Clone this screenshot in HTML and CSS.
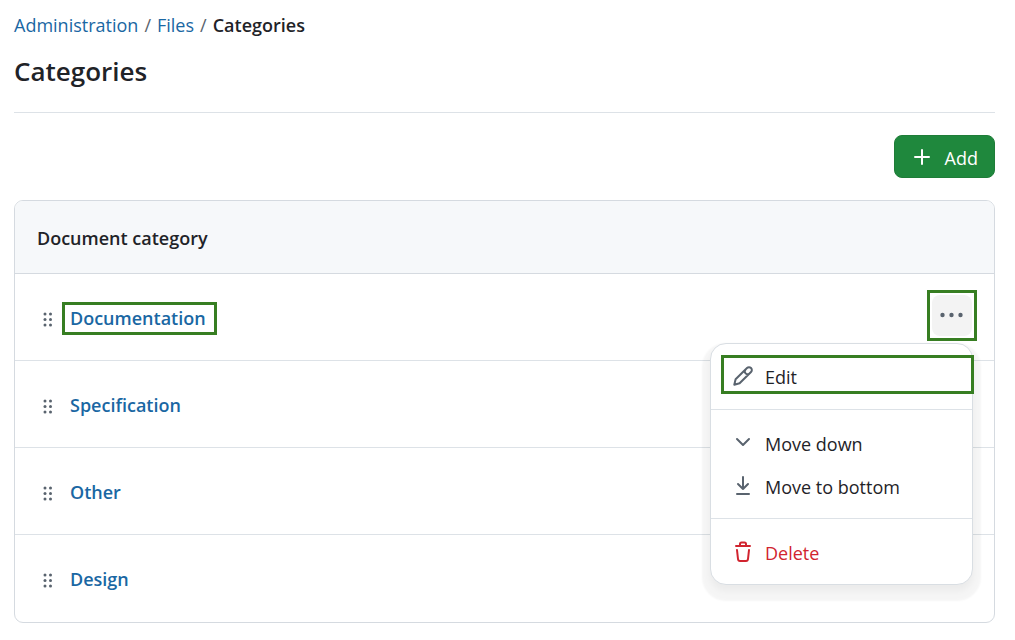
FILE: index.html
```html
<!DOCTYPE html>
<html lang="en">

<head>
    <meta charset="UTF-8">
    <meta name="viewport" content="width=device-width, initial-scale=1.0">
    <title>Categories</title>
    <link rel="stylesheet" href="styles.css">
</head>

<body>
    <nav class="breadcrumb" aria-label="Breadcrumb">
        <a href="#">Administration</a>
        <span class="separator">/</span>
        <a href="#">Files</a>
        <span class="separator">/</span>
        <span class="current">Categories</span>
    </nav>

    <h1>Categories</h1>

    <div class="toolbar">
        <button type="button" class="add-button">
            <svg width="22" height="22" viewBox="0 0 22 22" fill="none" stroke="currentColor" stroke-width="2" stroke-linecap="round"><path d="M11 3v14M4 10h14"/></svg>
            Add
        </button>
    </div>

    <section class="box">
        <h2>Document category</h2>
        <ul class="rows">
            <li>
                <svg class="handle" width="10" height="16" viewBox="0 0 10 16"><circle cx="2" cy="3" r="1.5"/><circle cx="7.5" cy="3" r="1.5"/><circle cx="2" cy="8.5" r="1.5"/><circle cx="7.5" cy="8.5" r="1.5"/><circle cx="2" cy="14" r="1.5"/><circle cx="7.5" cy="14" r="1.5"/></svg>
                <a href="#" class="highlight">Documentation</a>
                <div class="actions highlight">
                    <button type="button" class="menu-button" aria-label="More actions">
                        <svg width="24" height="6" viewBox="0 0 24 6"><circle cx="2.5" cy="3" r="2.2"/><circle cx="11.5" cy="3" r="2.2"/><circle cx="20.5" cy="3" r="2.2"/></svg>
                    </button>
                    <div class="menu">
                        <div class="group">
                            <button type="button" class="item highlight">
                                <svg width="22" height="22" viewBox="0 0 22 22"><path d="M2.3 19.7l1.3-5.500L15 3a2.650 2.650 0 0 1 4 4L7.600 18.300zM13.600 4.500a2.700 2.700 0 0 0 3.900 3.900"/></svg>
                                Edit
                            </button>
                        </div>
                        <div class="group">
                            <button type="button" class="item">
                                <svg width="22" height="22" viewBox="0 0 22 22"><path d="M5 7l6 6 6-6"/></svg>
                                Move down
                            </button>
                            <button type="button" class="item">
                                <svg width="22" height="22" viewBox="0 0 22 22"><path d="M11 2v12M6 9l5 5 5-5M5 19h12"/></svg>
                                Move to bottom
                            </button>
                        </div>
                        <div class="group">
                            <button type="button" class="item danger">
                                <svg width="22" height="22" viewBox="0 0 22 22"><path d="M4 5h14M8 5V3q0-1.500 1.500-1.500h3q1.500 0 1.500 1.500v2M5 9l1 9q.2 2 2 2h6q1.800 0 2-2l1-9"/></svg>
                                Delete
                            </button>
                        </div>
                    </div>
                </div>
            </li>
            <li>
                <svg class="handle" width="10" height="16" viewBox="0 0 10 16"><circle cx="2" cy="3" r="1.5"/><circle cx="7.5" cy="3" r="1.5"/><circle cx="2" cy="8.5" r="1.5"/><circle cx="7.5" cy="8.5" r="1.5"/><circle cx="2" cy="14" r="1.5"/><circle cx="7.5" cy="14" r="1.5"/></svg>
                <a href="#">Specification</a>
            </li>
            <li>
                <svg class="handle" width="10" height="16" viewBox="0 0 10 16"><circle cx="2" cy="3" r="1.5"/><circle cx="7.5" cy="3" r="1.5"/><circle cx="2" cy="8.5" r="1.5"/><circle cx="7.5" cy="8.5" r="1.5"/><circle cx="2" cy="14" r="1.5"/><circle cx="7.5" cy="14" r="1.5"/></svg>
                <a href="#">Other</a>
            </li>
            <li>
                <svg class="handle" width="10" height="16" viewBox="0 0 10 16"><circle cx="2" cy="3" r="1.5"/><circle cx="7.5" cy="3" r="1.5"/><circle cx="2" cy="8.5" r="1.5"/><circle cx="7.5" cy="8.5" r="1.5"/><circle cx="2" cy="14" r="1.5"/><circle cx="7.5" cy="14" r="1.5"/></svg>
                <a href="#">Design</a>
            </li>
        </ul>
    </section>
</body>

</html>
```

FILE: styles.css
```css
* {
    box-sizing: border-box;
}

body {
    margin: 0;
    padding: 12px 20px 16px 14px;
    background-color: #fff;
    color: #1f2328;
    font-family: "Open Sans", "Noto Sans", sans-serif;
    font-size: 18px;
    line-height: 26px;
}

button {
    font: inherit;
    cursor: pointer;
}

a {
    color: #1a67a3;
    text-decoration: none;
}

.breadcrumb {
    display: flex;
    gap: 6px;
}

.separator {
    color: #59636e;
}

.current {
    font-weight: 600;
}

h1 {
    margin: 15px 0 22px;
    padding-bottom: 23px;
    border-bottom: 1px solid #dde2e7;
    font-size: 26px;
    font-weight: 600;
    line-height: 36px;
}

.toolbar {
    display: flex;
    justify-content: flex-end;
    margin-bottom: 22px;
}

.add-button {
    display: flex;
    align-items: center;
    gap: 12px;
    height: 43px;
    padding: 2px 16px 0;
    border: 1px solid #1f7d38;
    border-radius: 8px;
    background-color: #1f883d;
    color: #fff;
}

.box {
    border: 1px solid #d5dae0;
    border-radius: 9px;
}

h2 {
    margin: 0;
    padding: 24px 22px 22px;
    border-bottom: 1px solid #d5dae0;
    border-radius: 8px 8px 0 0;
    background-color: #f6f8fa;
    font-size: 18px;
    font-weight: 600;
    line-height: 26px;
}

.rows {
    margin: 0;
    padding: 0;
    list-style: none;
}

.rows li {
    display: flex;
    align-items: center;
    height: 87px;
    padding: 0 17px 0 28px;
    border-bottom: 1px solid #dde2e7;
}

.rows li:last-child {
    border-bottom: 0;
}

.rows a {
    margin-top: 2px;
    padding: 0 8px 1px 5px;
    border: 3px solid transparent;
    font-weight: 600;
}

.handle {
    margin: 3px 9px 0 0;
    fill: #59636e;
}

.rows .highlight {
    border: 3px solid #377e22;
}

.actions {
    position: relative;
    margin: 0 0 4px auto;
    padding: 2px;
}

.menu-button {
    display: flex;
    align-items: center;
    justify-content: center;
    width: 40px;
    height: 41px;
    padding: 0;
    border: 0;
    border-radius: 8px;
    background-color: #f3f3f3;
    fill: #59636e;
}

.menu {
    position: absolute;
    top: 50px;
    right: 1px;
    width: 263px;
    border: 1px solid #d9dee3;
    border-radius: 16px;
    background-color: #fff;
    box-shadow: 0 6px 6px rgba(0, 0, 0, 0.04), 0 8px 2px 8px rgba(0, 0, 0, 0.04);
}

.group {
    padding: 11px 0;
}

.group + .group {
    border-top: 1px solid #dde2e7;
}

.item {
    display: flex;
    align-items: center;
    gap: 11px;
    width: 100%;
    height: 43px;
    padding: 3px 21px 0;
    border: 0;
    background: none;
    color: inherit;
}

.item svg {
    margin-top: -2px;
    fill: none;
    stroke: #59636e;
    stroke-width: 2;
    stroke-linecap: round;
    stroke-linejoin: round;
}

.item.highlight {
    width: 253px;
    height: 39px;
    margin: 0 0 4px 10px;
    padding: 6px 8px 0;
}

.danger {
    color: #d1242f;
}

.danger svg {
    stroke: #d1242f;
}
```
